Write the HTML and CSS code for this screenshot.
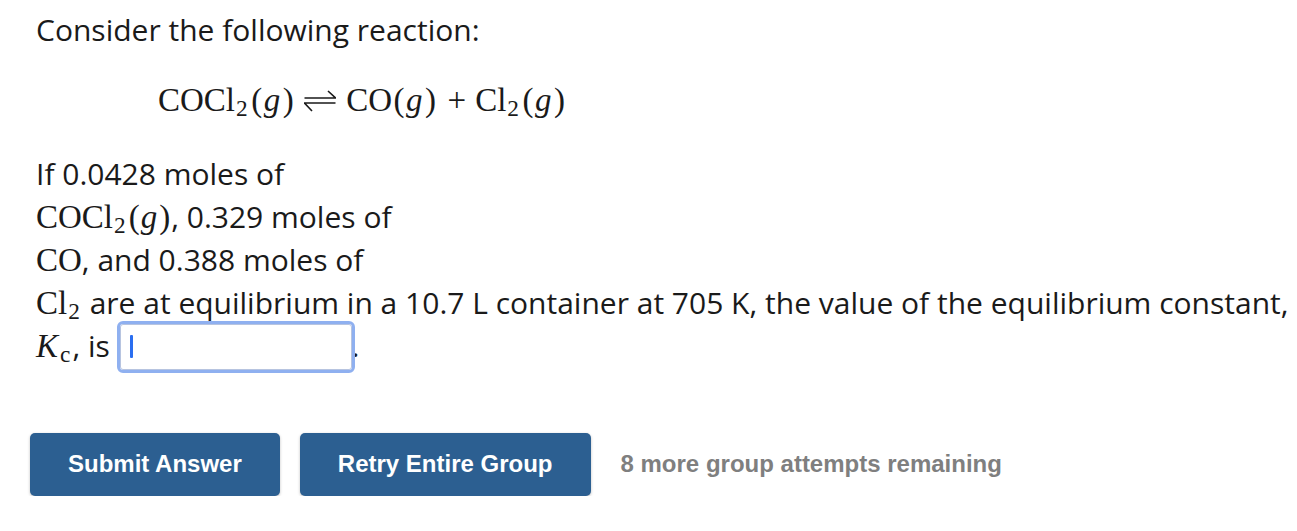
FILE: index.html
```html
<!DOCTYPE html>
<html>
<head>
<meta charset="utf-8">
<link rel="stylesheet" href="styles.css">
</head>
<body>
<div class="question">
  <p class="intro">Consider the following reaction:</p>
  <div class="equation"><span class="m">COCl<sub>2</sub><span class="p">(</span><i>g</i><span class="p">)</span></span><svg class="rel" width="32" height="26" viewBox="0 0 32 26" aria-label="equilibrium"><path d="M0.5 11H31.5L24 4M31.5 16H0.5L8 24" fill="none" stroke="#1a1a1a" stroke-width="1.6" stroke-linejoin="miter"/></svg><span class="m">CO<span class="p">(</span><i>g</i><span class="p">)</span></span><span class="m bin">+</span><span class="m">Cl<sub>2</sub><span class="p">(</span><i>g</i><span class="p">)</span></span></div>
  <div class="text">
    If 0.0428 moles of<br>
    <span class="m">COCl<sub>2</sub><span class="p">(</span><i>g</i><span class="p">)</span></span>, 0.329 moles of<br>
    <span class="m">CO</span>, and 0.388 moles of<br>
    <span class="m">Cl<sub>2</sub></span> are at equilibrium in a 10.7 L container at 705 K, the value of the equilibrium constant,<br>
    <span class="m"><i class="k">K</i><sub>c</sub></span>, is <span class="answer"><span class="caret"></span></span>.
  </div>
</div>
<div class="actions">
  <button class="btn">Submit Answer</button>
  <button class="btn">Retry Entire Group</button>
  <span class="remaining">8 more group attempts remaining</span>
</div>
</body>
</html>
```
FILE: styles.css
```css
body {
  margin: 0;
  background: #fff;
  color: #1a1a1a;
  font-family: "Open Sans", "Noto Sans", sans-serif;
}
.question {
  padding: 8px 0 0 36px;
  font-size: 30px;
  white-space: nowrap;
}
.intro {
  margin: 0;
  line-height: 43px;
}
.equation {
  margin: 29px 0 32px 122px;
  line-height: 40px;
}
.m {
  font-family: "Liberation Serif", "DejaVu Serif", serif;
  font-size: 33px;
  line-height: 1;
}
.m sub {
  font-size: 0.707em;
  vertical-align: -0.22em;
  line-height: 0;
  margin-left: 1px;
  margin-right: 2px;
}
.m i { margin-right: 1px; }
.m .k { margin-right: 1px; }
.p { margin: 0 1px; }
.equation .p { margin: 0 1.5px; }
.rel {
  vertical-align: -2px;
  margin: 0 10px 0 9px;
}
.bin { margin: 0 9px 0 10px; }
.text {
  line-height: 43px;
}
.answer {
  display: inline-block;
  vertical-align: middle;
  box-sizing: border-box;
  width: 232px;
  height: 46px;
  margin-left: 2px;
  border: 1px solid #b7c4e0;
  outline: 3px solid #8fb0f0;
  border-radius: 3px;
  background: #fff;
  position: relative;
  margin-top: -4px;
}
.caret {
  position: absolute;
  left: 9px;
  top: 10px;
  width: 3px;
  height: 23px;
  background: #2a6ef0;
  border-radius: 1px;
}
.actions {
  display: flex;
  align-items: center;
  gap: 20px;
  padding: 63px 30px 0;
}
.btn {
  font-family: "Liberation Sans", Arial, sans-serif;
  font-weight: bold;
  font-size: 24px;
  color: #fff;
  background: #2c5f91;
  border: none;
  border-radius: 5px;
  height: 63px;
  padding: 0 38px;
  box-shadow: 0 1px 3px rgba(0,0,0,0.25);
}
.remaining {
  margin-left: 10px;
  font-family: "Liberation Sans", Arial, sans-serif;
  font-weight: bold;
  font-size: 24px;
  color: #7f7f7f;
}
```
